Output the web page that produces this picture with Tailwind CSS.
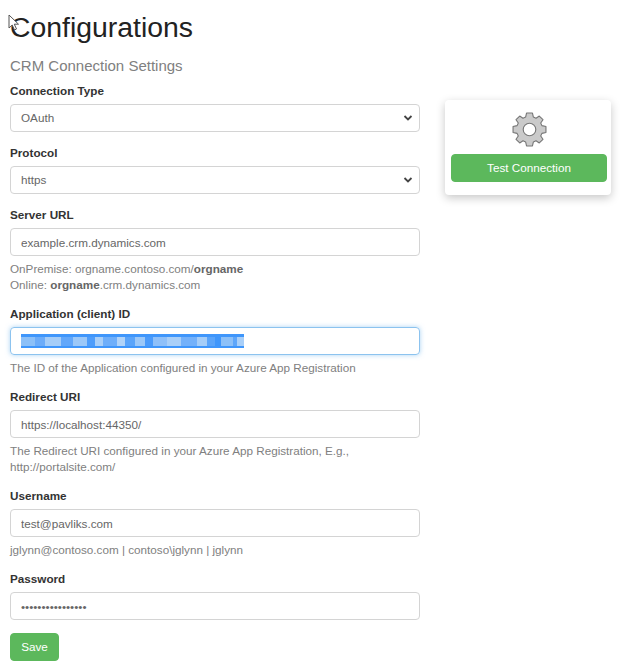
<!DOCTYPE html>
<html lang="en">
<head>
    <meta charset="UTF-8">
    <title>Configurations</title>
    <script src="https://cdn.jsdelivr.net/npm/@tailwindcss/browser@4"></script>
</head>
<body class="bg-white font-['Liberation_Sans',Arial,sans-serif] text-[#333] relative">
    <div class="px-[10px] pt-[9px]">
        <h1 class="text-[28.4px] leading-[36px] text-[#222]">Configurations</h1>
        <h2 class="text-[15px] leading-[20px] text-[#808080] mt-[11px] mb-[5px]">CRM Connection Settings</h2>

        <div class="flex items-start gap-[25px]">
            <form class="w-[410px]">
                <div class="mb-[11px]">
                    <label class="block text-[11.7px] leading-[20px] font-bold mb-[3px]">Connection Type</label>
                    <div class="h-[28px] border border-[#d4d4d4] rounded-[4px] pl-[10px] pr-[6px] flex items-center justify-between text-[11.7px] text-[#666]">
                        <span>OAuth</span>
                        <svg width="10" height="8" viewBox="0 0 10 8"><path d="M1.5 2L5 5.5L8.5 2" fill="none" stroke="#444" stroke-width="1.8"/></svg>
                    </div>
                </div>
                <div class="mb-[11px]">
                    <label class="block text-[11.7px] leading-[20px] font-bold mb-[3px]">Protocol</label>
                    <div class="h-[28px] border border-[#d4d4d4] rounded-[4px] pl-[10px] pr-[6px] flex items-center justify-between text-[11.7px] text-[#666]">
                        <span>https</span>
                        <svg width="10" height="8" viewBox="0 0 10 8"><path d="M1.5 2L5 5.5L8.5 2" fill="none" stroke="#444" stroke-width="1.8"/></svg>
                    </div>
                </div>
                <div class="mb-[11px]">
                    <label class="block text-[11.7px] leading-[20px] font-bold mb-[3px]">Server URL</label>
                    <input type="text" value="example.crm.dynamics.com" class="block w-full h-[28px] border border-[#d4d4d4] rounded-[4px] px-[10px] text-[11.7px] text-[#666]">
                    <p class="text-[11.7px] leading-[16px] text-[#808080] mt-[5px]">OnPremise: orgname.contoso.com/<b class="text-[#666]">orgname</b><br>Online: <b class="text-[#666]">orgname</b>.crm.dynamics.com</p>
                </div>
                <div class="mb-[11px]">
                    <label class="block text-[11.7px] leading-[20px] font-bold mb-[3px]">Application (client) ID</label>
                    <div class="h-[28px] border border-[#8cc3ef] rounded-[4px] px-[10px] flex items-center shadow-[0_0_5px_rgba(102,175,233,0.55)]">
                        <div class="w-[223px] h-[14px] bg-[#3f96fb] flex items-center">
                            <div class="w-full h-[9px] bg-[linear-gradient(90deg,#8cc0f8_0_14px,#6cacf9_14px_24px,#a5cdf8_24px_40px,#62a7fa_40px_52px,#9cc8f8_52px_66px,#4e9dfb_66px_74px,#a9cff8_74px_82px,#6eaefa_82px_96px,#b1d3f8_96px_104px,#5aa4fa_104px_114px,#9cc8f8_114px_124px,#4b9bfb_124px_132px,#8fc0f9_132px_146px,#a9cff8_146px_160px,#74b1fa_160px_176px,#a5cdf8_176px_186px,#5aa4fa_186px_194px,#3f96fb_194px_200px,#8cc0f8_200px_212px,#5ea6fa_212px_216px,#a9cff8_216px_223px)]"></div>
                        </div>
                    </div>
                    <p class="text-[11.7px] leading-[16px] text-[#808080] mt-[5px]">The ID of the Application configured in your Azure App Registration</p>
                </div>
                <div class="mb-[11px]">
                    <label class="block text-[11.7px] leading-[20px] font-bold mb-[3px]">Redirect URI</label>
                    <input type="text" value="https://localhost:44350/" class="block w-full h-[28px] border border-[#d4d4d4] rounded-[4px] px-[10px] text-[11.7px] text-[#666]">
                    <p class="text-[11.7px] leading-[16px] text-[#808080] mt-[5px]">The Redirect URI configured in your Azure App Registration, E.g.,<br>http://portalsite.com/</p>
                </div>
                <div class="mb-[11px]">
                    <label class="block text-[11.7px] leading-[20px] font-bold mb-[3px]">Username</label>
                    <input type="text" value="test@pavliks.com" class="block w-full h-[28px] border border-[#d4d4d4] rounded-[4px] px-[10px] text-[11.7px] text-[#666]">
                    <p class="text-[11.7px] leading-[16px] text-[#808080] mt-[5px]">jglynn@contoso.com | contoso\jglynn | jglynn</p>
                </div>
                <div class="mb-[13px]">
                    <label class="block text-[11.7px] leading-[20px] font-bold mb-[3px]">Password</label>
                    <input type="password" value="aaaaaaaaaaaaaaaa" class="block w-full h-[28px] border border-[#d4d4d4] rounded-[4px] px-[10px] text-[11.7px] text-[#666]">
                </div>
                <button type="button" class="h-[28px] w-[49px] bg-[#5cb85c] border border-[#5cb85c] rounded-[4px] text-white text-[11.7px]">Save</button>
            </form>

            <div class="w-[166px] mt-[19px] h-[95px] bg-white rounded-[4px] shadow-[0_3px_10px_rgba(0,0,0,0.22)] pl-[6px] pr-[4px] pt-[11px] flex flex-col items-center">
                <svg width="37" height="37" viewBox="-20 -20 40 40">
                    <path fill="#cacaca" stroke="#777" stroke-width="1.2" stroke-linejoin="round" fill-rule="evenodd" d="M-4.2-13.4L-3.2-17.78H3.2L4.2-13.4L7-12.12L10.58-14.57L14.57-10.58L12.12-7L13.4-4.2L17.78-3.2V3.2L13.4 4.2L12.12 7L14.57 10.58L10.58 14.57L7 12.12L4.2 13.4L3.2 17.78H-3.2L-4.2 13.4L-7 12.12L-10.58 14.57L-14.57 10.58L-12.12 7L-13.4 4.2L-17.78 3.2V-3.2L-13.4-4.2L-12.12-7L-14.57-10.58L-10.58-14.57L-7-12.12ZM6.8 0A6.8 6.8 0 1 0-6.8 0A6.8 6.8 0 1 0 6.8 0Z"/>
                </svg>
                <button type="button" class="w-full h-[28px] mt-[6px] bg-[#5cb85c] border border-[#5cb85c] rounded-[4px] text-white text-[11.7px]">Test Connection</button>
            </div>
        </div>
    </div>

    <!-- mouse pointer from the capture -->
    <svg class="absolute left-[8px] top-[14px]" width="13" height="18" viewBox="0 0 13 18">
        <path d="M1 1V14L4.2 11L6.5 16L8.5 15L6.3 10.2H10.5Z" fill="#fff" stroke="#555" stroke-width="1"/>
    </svg>
</body>
</html>
